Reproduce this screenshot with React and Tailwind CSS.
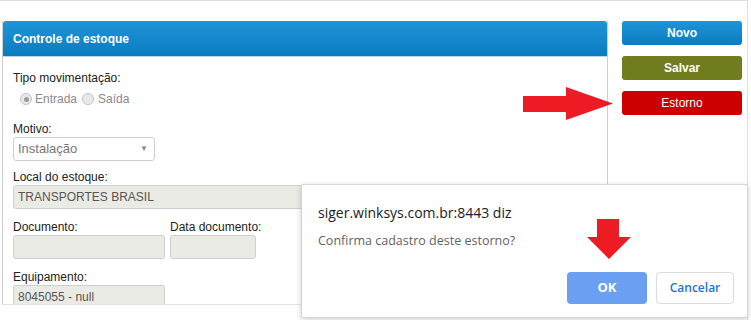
import React from "react";

function Radio({ checked }) {
  return (
    <span className="inline-flex h-[12px] w-[12px] items-center justify-center rounded-full border border-[#c4c4c4] bg-[#e9e9e9]">
      {checked && <span className="h-[5px] w-[5px] rounded-full bg-[#9a9a9a]" />}
    </span>
  );
}

function Label({ children }) {
  return <div className="h-[16px] text-[12px] leading-[16px] text-[#222]">{children}</div>;
}

function DisabledInput({ w, children }) {
  return (
    <div
      className={`${w} flex h-[24px] items-center rounded-[3px] border border-[#cfcfcf] bg-[#ebebe6] px-[4px] text-[12px] text-[#555]`}
    >
      {children}
    </div>
  );
}

export default function App() {
  return (
    <div
      className="relative h-[320px] w-[751px] overflow-hidden bg-white"
      style={{ fontFamily: '"Liberation Sans", Arial, sans-serif' }}
    >
      <div className="h-[320px] w-[748px] border-r border-t border-[#dedede]">
        <div className="flex items-start">
          {/* Left panel */}
          <div className="ml-[2px] mt-[20px] h-[284px] w-[606px] overflow-hidden border-x border-b border-[#e4e4e4] border-x-[#cfcfcf]">
            <div className="flex h-[36px] items-center rounded-t-[3px] border-b border-[#b7d6ea] bg-gradient-to-b from-[#1d95d8] to-[#0a7cc0] pl-[10px] text-[12px] font-bold text-white">
              Controle de estoque
            </div>
            <div className="pl-[10px] pt-[13px]">
              <Label>Tipo movimentação:</Label>
              <div className="mt-[4px] flex h-[18px] items-center text-[12px] text-[#8a8a8a]">
                <span className="ml-[7px] flex"><Radio checked /></span>
                <span className="ml-[3px]">Entrada</span>
                <span className="ml-[5px] flex"><Radio /></span>
                <span className="ml-[4px]">Saída</span>
              </div>
              <div className="mt-[13px]">
                <Label>Motivo:</Label>
                <div className="flex h-[24px] w-[142px] items-center justify-between rounded-[3px] border border-[#cfcfcf] bg-white pl-[4px] pr-[6px] text-[13px] text-[#777]">
                  <span>Instalação</span>
                  <span className="text-[8px] text-[#888]">▼</span>
                </div>
              </div>
              <div className="mt-[8px]">
                <Label>Local do estoque:</Label>
                <DisabledInput w="w-[330px]">TRANSPORTES BRASIL</DisabledInput>
              </div>
              <div className="mt-[10px] flex items-start">
                <div>
                  <Label>Documento:</Label>
                  <DisabledInput w="w-[152px]" />
                </div>
                <div className="ml-[5px]">
                  <Label>Data documento:</Label>
                  <DisabledInput w="w-[86px]" />
                </div>
                <div className="-mt-[3px] ml-[43px] h-[32px] w-[80px] rounded-[3px] bg-[#1682c6]" />
              </div>
              <div className="mt-[10px]">
                <Label>Equipamento:</Label>
                <DisabledInput w="w-[152px]">8045055 - null</DisabledInput>
              </div>
            </div>
          </div>

          {/* Right buttons */}
          <div className="ml-[14px] mt-[20px] flex w-[120px] flex-col gap-[11px]">
            <button className="h-[24px] rounded-[3px] bg-gradient-to-b from-[#1d95d8] to-[#0a7cc0] text-[12px] font-bold text-white">
              Novo
            </button>
            <button className="h-[24px] rounded-[3px] bg-[#717c1f] text-[12px] font-bold text-white">
              Salvar
            </button>
            <button className="h-[24px] rounded-[3px] bg-[#cc0000] text-[12px] text-white">
              Estorno
            </button>
          </div>
        </div>
      </div>

      {/* Right arrow annotation */}
      <svg className="absolute left-[523px] top-[87px]" width="91" height="34" viewBox="0 0 91 34">
        <polygon points="0,9 43,9 43,0 90,16.5 43,33 43,25 0,25" fill="#ed1c24" />
      </svg>

      {/* Confirm dialog */}
      <div
        className="absolute left-[301px] top-[184px] h-[134px] w-[447px] rounded-[2px] border border-[#d4d4d4] bg-white shadow-[0_2px_6px_rgba(0,0,0,0.18)]"
        style={{ fontFamily: '"Open Sans", "Noto Sans", sans-serif' }}
      >
        <div className="ml-[16px] mt-[18px] text-[14px] leading-[20px] text-[#202124]">
          siger.winksys.com.br:8443 diz
        </div>
        <div className="ml-[16px] mt-[9px] text-[12.5px] leading-[18px] text-[#5f6368]">
          Confirma cadastro deste estorno?
        </div>
        <div className="mr-[13px] mt-[22px] flex justify-end gap-[9px]">
          <button className="h-[32px] w-[80px] rounded-[4px] bg-[#6a9ff2] text-[13px] font-bold text-white">
            OK
          </button>
          <button className="h-[32px] w-[78px] rounded-[4px] border border-[#dadce0] bg-white text-[12px] font-semibold text-[#1a73e8]">
            Cancelar
          </button>
        </div>
      </div>

      {/* Down arrow annotation */}
      <svg className="absolute left-[587px] top-[219px]" width="44" height="40" viewBox="0 0 44 40">
        <polygon points="10,0 32,0 32,18 44,18 22,40 0,18 10,18" fill="#ed1c24" />
      </svg>
    </div>
  );
}
